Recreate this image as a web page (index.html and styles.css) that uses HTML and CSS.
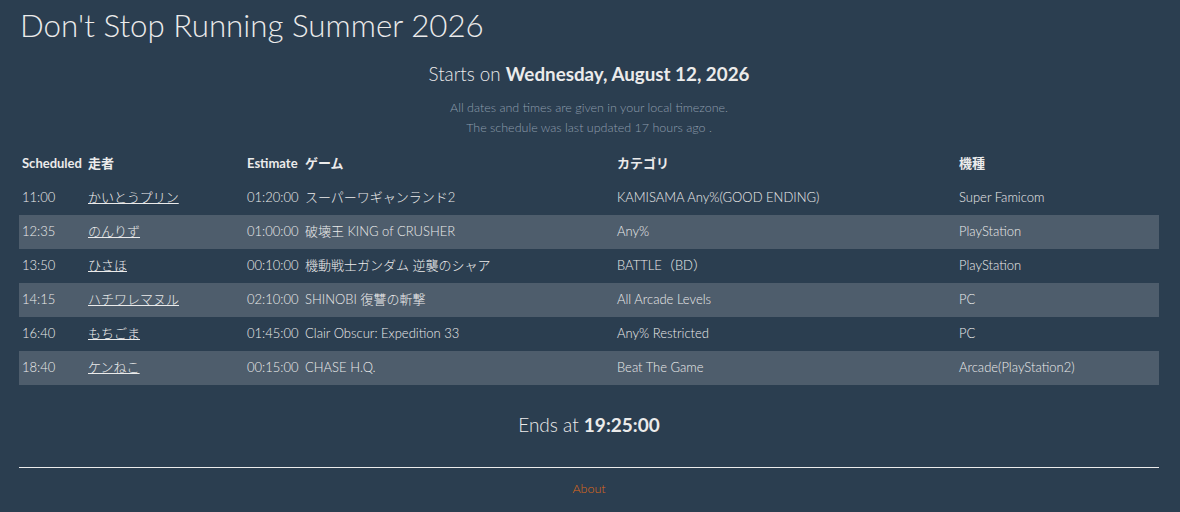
FILE: index.html
```html
<!DOCTYPE html>
<html lang="ja">
<head>
<meta charset="utf-8">
<title>Don't Stop Running Summer 2026</title>
<link rel="stylesheet" href="styles.css">
</head>
<body>
<div class="container">
  <h1 class="title">Don't Stop Running Summer 2026</h1>
  <p class="starts">Starts on <strong>Wednesday, August 12, 2026</strong></p>
  <p class="note">All dates and times are given in your local timezone.<br>The schedule was last updated 17 hours ago .</p>
  <table class="schedule">
    <colgroup>
      <col class="c-time"><col class="c-runner"><col class="c-est"><col class="c-game"><col class="c-cat"><col class="c-sys">
    </colgroup>
    <thead>
      <tr><th>Scheduled</th><th>走者</th><th>Estimate</th><th>ゲーム</th><th>カテゴリ</th><th>機種</th></tr>
    </thead>
    <tbody>
      <tr><td>11:00</td><td><a href="#">かいとうプリン</a></td><td>01:20:00</td><td>スーパーワギャンランド2</td><td>KAMISAMA Any%(GOOD ENDING)</td><td>Super Famicom</td></tr>
      <tr><td>12:35</td><td><a href="#">のんりず</a></td><td>01:00:00</td><td>破壊王 KING of CRUSHER</td><td>Any%</td><td>PlayStation</td></tr>
      <tr><td>13:50</td><td><a href="#">ひさほ</a></td><td>00:10:00</td><td>機動戦士ガンダム 逆襲のシャア</td><td>BATTLE（BD）</td><td>PlayStation</td></tr>
      <tr><td>14:15</td><td><a href="#">ハチワレマヌル</a></td><td>02:10:00</td><td>SHINOBI 復讐の斬撃</td><td>All Arcade Levels</td><td>PC</td></tr>
      <tr><td>16:40</td><td><a href="#">もちごま</a></td><td>01:45:00</td><td>Clair Obscur: Expedition 33</td><td>Any% Restricted</td><td>PC</td></tr>
      <tr><td>18:40</td><td><a href="#">ケンねこ</a></td><td>00:15:00</td><td>CHASE H.Q.</td><td>Beat The Game</td><td>Arcade(PlayStation2)</td></tr>
    </tbody>
  </table>
  <p class="ends">Ends at <strong>19:25:00</strong></p>
  <hr class="rule">
  <footer class="footer"><a href="#">About</a></footer>
</div>
</body>
</html>
```
FILE: styles.css
```css
html, body {
  margin: 0;
  padding: 0;
}
body {
  background: #2b3e50;
  color: #ebebeb;
  font-family: Lato, "Noto Sans CJK JP", sans-serif;
  font-size: 13px;
  font-weight: 300;
  line-height: 1.5;
}
.container {
  width: 1140px;
  margin-left: 19px;
}
.title {
  margin: 0;
  padding-top: 3px;
  font-size: 31.3px;
  font-weight: 300;
  line-height: 44px;
  padding-left: 1px;
}
.starts {
  margin: 14px 0 0;
  text-align: center;
  font-size: 18.8px;
  font-weight: 300;
  line-height: 26px;
}
.starts strong {
  font-weight: 700;
}
.note {
  margin: 11px 0 0;
  text-align: center;
  font-size: 12.5px;
  font-weight: 300;
  line-height: 20px;
  color: #8d9dac;
}
.schedule {
  margin-top: 8px;
  width: 1140px;
  border-collapse: collapse;
  table-layout: fixed;
}
.c-time { width: 66px; }
.c-runner { width: 159px; }
.c-est { width: 58px; }
.c-game { width: 312px; }
.c-cat { width: 342px; }
.c-sys { width: 203px; }
.schedule th {
  text-align: left;
  font-weight: 700;
  font-size: 13px;
  height: 35px;
  padding: 0 3px;
  white-space: nowrap;
}
.schedule td {
  height: 34px;
  padding: 0 3px;
  white-space: nowrap;
}
.schedule tbody tr:nth-child(even) {
  background: #4e5d6c;
}
.schedule a {
  color: #ebebeb;
  text-decoration: underline;
  font-size: 13px;
}
.ends {
  margin: 26px 0 0;
  text-align: center;
  font-size: 19px;
  font-weight: 300;
  line-height: 28px;
}
.ends strong {
  font-weight: 700;
}
.rule {
  margin: 28px 0 0;
  border: 0;
  border-top: 1px solid #ebebeb;
}
.footer {
  text-align: center;
  padding-top: 12px;
  font-size: 12.5px;
}
.footer a {
  color: #df691a;
  text-decoration: none;
  font-weight: 300;
}
```
